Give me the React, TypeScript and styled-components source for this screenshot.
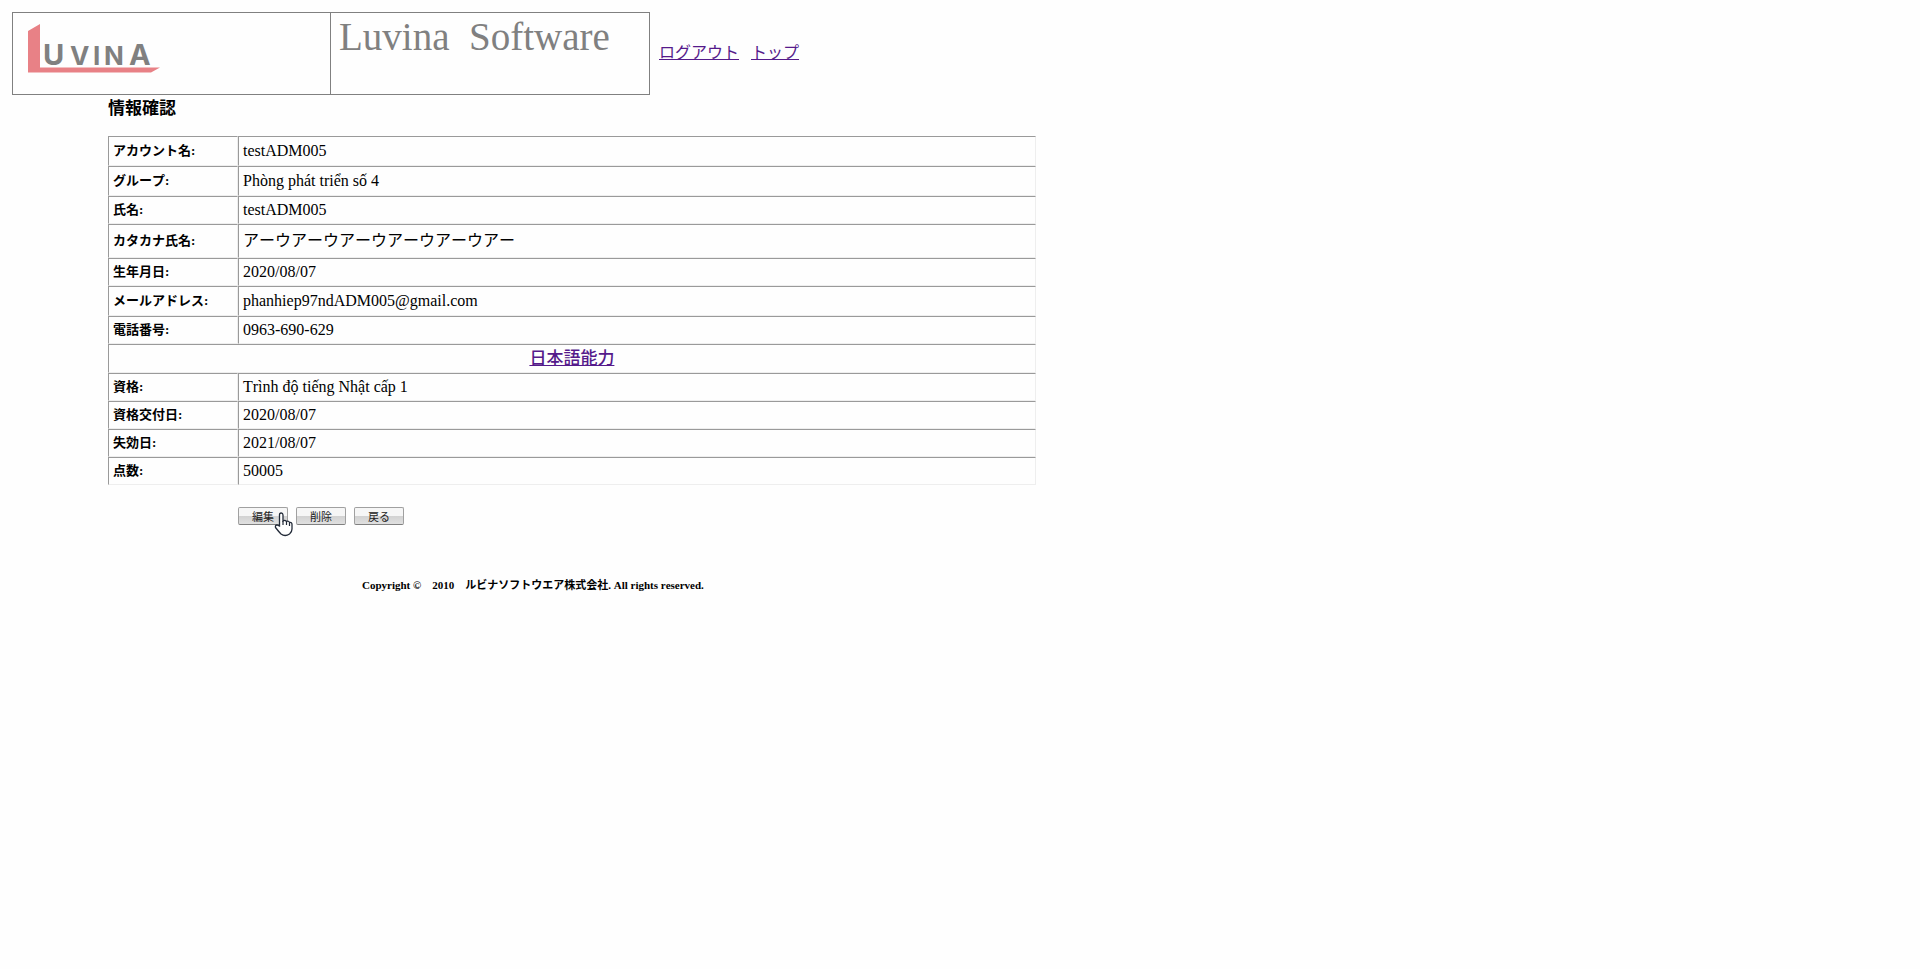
import React from 'react';
import styled, { createGlobalStyle } from 'styled-components';

const GlobalStyle = createGlobalStyle`
  body {
    margin: 0;
    background: #fefefe;
    color: #000;
    font: 16px/18px 'Liberation Serif', 'Noto Sans CJK JP', serif;
    font-kerning: none;
  }
`;

const Page = styled.div`
  padding: 12px;
`;

const Header = styled.header`
  display: flex;
  align-items: flex-start;
`;

const Banner = styled.div`
  box-sizing: border-box;
  width: 638px;
  max-width: 100%;
  height: 83px;
  display: grid;
  grid-template-columns: 1fr 1fr;
  border: 1px solid #808080;
`;

const LogoCell = styled.div`
  padding: 10px 15px;
  border-right: 1px solid #808080;
`;

const LogoLetter = styled.tspan<{ $large?: boolean }>`
  font-size: ${(p) => (p.$large ? 29 : 26)}px;
`;

const LogoText = styled.text`
  fill: #808080;
  font-family: Inter, sans-serif;
  font-weight: 700;
`;

const Brand = styled.div`
  padding: 2px 8px;
  color: #808080;
  font-size: 39px;
  line-height: 44px;
  white-space: pre;
`;

const Nav = styled.nav`
  display: flex;
  gap: 12px;
  padding: 31px 9px 0;
`;

const Link = styled.a`
  color: #551a8b;
  line-height: 20px;
`;

const Main = styled.main`
  box-sizing: border-box;
  width: 54%;
  padding-left: 96px;
`;

const Title = styled.h1`
  margin: 0 0 13px;
  font-size: 17px;
  line-height: 28px;
`;

const InfoTable = styled.table`
  width: 100%;
  border-collapse: separate;
  border-spacing: 0;
`;

const Row = styled.tr<{ $height: number }>`
  height: ${(p) => p.$height}px;
`;

const cellBorder = `
  border: 1px solid #eee;
  border-top-color: #9a9a9a;
  border-left-color: #9a9a9a;
`;

const Label = styled.th`
  ${cellBorder}
  box-sizing: border-box;
  width: 130px;
  padding: 0 4px;
  font-size: 13px;
  text-align: left;
`;

const Value = styled.td`
  ${cellBorder}
  padding: 0 4px;
`;

const SectionCell = styled.td`
  ${cellBorder}
  padding: 0;
  text-align: center;
  font-size: 17px;
  font-weight: 500;
`;

const Actions = styled.div`
  position: relative;
  display: flex;
  gap: 8px;
  margin: 22px 0 0 130px;
`;

const ActionButton = styled.button`
  width: 50px;
  height: 18px;
  padding: 0;
  border: 1px solid #a0a0a0;
  border-bottom-color: #808080;
  border-radius: 2px;
  background: linear-gradient(#f6f6f6 0 48%, #d2d2d2 52%, #e0e0e0);
  color: #222;
  font: 11px/14px 'Noto Sans CJK JP', sans-serif;
  cursor: pointer;
`;

const Pointer = styled.svg`
  position: absolute;
  left: 36px;
  top: 5px;
`;

const Footer = styled.footer`
  margin-top: 51px;
  padding-left: 350px;
  font-size: 11px;
  font-weight: bold;
  white-space: pre;
`;

type Field = { label: string; value: string; height: number };

const personal: Field[] = [
  { label: 'アカウント名:', value: 'testADM005', height: 30 },
  { label: 'グループ:', value: 'Phòng phát triển số 4', height: 30 },
  { label: '氏名:', value: 'testADM005', height: 28 },
  { label: 'カタカナ氏名:', value: 'アーウアーウアーウアーウアーウアー', height: 34 },
  { label: '生年月日:', value: '2020/08/07', height: 28 },
  { label: 'メールアドレス:', value: 'phanhiep97ndADM005@gmail.com', height: 30 },
  { label: '電話番号:', value: '0963-690-629', height: 28 },
];

const japanese: Field[] = [
  { label: '資格:', value: 'Trình độ tiếng Nhật cấp 1', height: 28 },
  { label: '資格交付日:', value: '2020/08/07', height: 28 },
  { label: '失効日:', value: '2021/08/07', height: 28 },
  { label: '点数:', value: '50005', height: 28 },
];

const FieldRow = ({ label, value, height }: Field) => (
  <Row $height={height}>
    <Label scope="row">{label}</Label>
    <Value>{value}</Value>
  </Row>
);

const Logo = () => (
  <svg width="134" height="52" viewBox="0 0 134 52" role="img" aria-label="Luvina">
    <path d="M0 8 12 1V44.500H132L123 49.500H0Z" fill="#e88186" />
    <LogoText y="42">
      <LogoLetter x="15" $large>U</LogoLetter>
      <LogoLetter x="42">V</LogoLetter>
      <LogoLetter x="65">I</LogoLetter>
      <LogoLetter x="76">N</LogoLetter>
      <LogoLetter x="101" $large>A</LogoLetter>
    </LogoText>
  </svg>
);

export default function App() {
  return (
    <>
      <GlobalStyle />
      <Page>
        <Header>
          <Banner>
            <LogoCell><Logo /></LogoCell>
            <Brand>{'Luvina  Software'}</Brand>
          </Banner>
          <Nav>
            <Link href="#logout">ログアウト</Link>
            <Link href="#top">トップ</Link>
          </Nav>
        </Header>
        <Main>
          <Title>情報確認</Title>
          <InfoTable>
            <tbody>
              {personal.map((f) => <FieldRow key={f.label} {...f} />)}
              <Row $height={29}>
                <SectionCell colSpan={2}><Link href="#japanese">日本語能力</Link></SectionCell>
              </Row>
              {japanese.map((f) => <FieldRow key={f.label} {...f} />)}
            </tbody>
          </InfoTable>
          <Actions>
            <ActionButton type="button">編集</ActionButton>
            <ActionButton type="button">削除</ActionButton>
            <ActionButton type="button">戻る</ActionButton>
            <Pointer width="20" height="26" viewBox="0 0 20 26" aria-hidden="true">
              <path
                d="M5.500 14V3Q5.500 1 7.200 1T9 3V9Q11 7.500 12.500 9.500Q14.500 8.500 15.500 10.500Q18 10 18 12.500V17Q18 20 15.500 22Q11 25 7 22Q5 20 1.500 15.500Q1 13 3 13Z"
                fill="#fff" stroke="#222a38" strokeWidth="1.300"
              />
              <path d="M9 9V13M12.500 10V13M15.500 11V14" stroke="#222a38" strokeWidth="1.200" />
            </Pointer>
          </Actions>
        </Main>
        <Footer>{'Copyright ©　2010　ルビナソフトウエア株式会社. All rights reserved.'}</Footer>
      </Page>
    </>
  );
}
